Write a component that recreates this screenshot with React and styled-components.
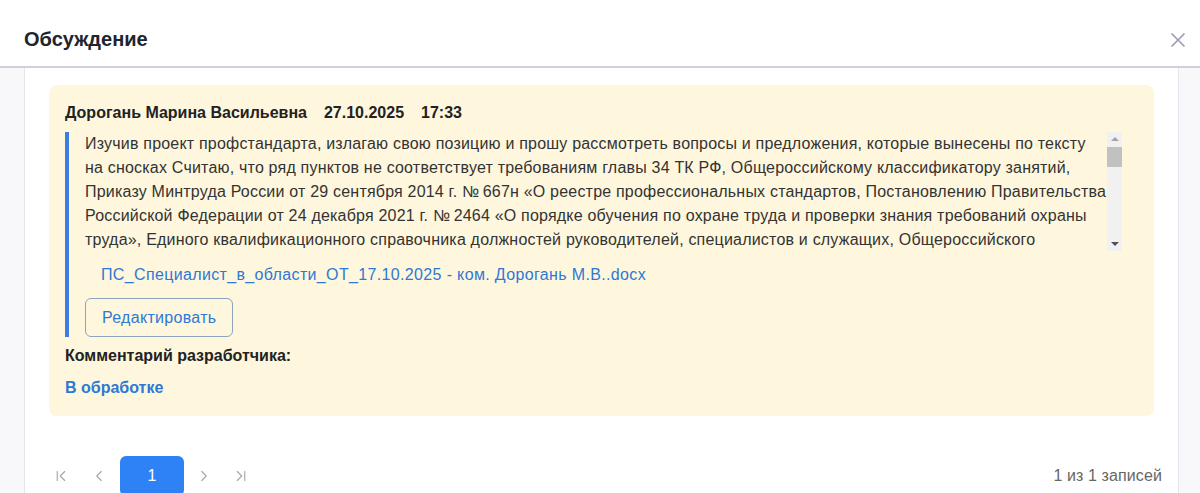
import React from "react";
import styled, { createGlobalStyle } from "styled-components";
import { ChevronFirst, ChevronLeft, ChevronRight, ChevronLast } from "lucide-react";

const GlobalStyle = createGlobalStyle`
  html, body {
    margin: 0;
    padding: 0;
    height: 493px;
    overflow: hidden;
    background: #ffffff;
  }
  * {
    box-sizing: border-box;
  }
  body {
    font-family: "Liberation Sans", Arial, sans-serif;
  }
`;

const Modal = styled.div`
  width: 1200px;
  height: 493px;
  display: flex;
  flex-direction: column;
  background: #fff;
  overflow: hidden;
`;

const Header = styled.div`
  height: 68px;
  flex-shrink: 0;
  display: flex;
  align-items: center;
  justify-content: space-between;
  padding: 13px 14px 0 24px;
  border-bottom: 2px solid #cfd0de;
`;

const Title = styled.h2`
  margin: 0;
  font-size: 20px;
  font-weight: 700;
  color: #1f242d;
`;

const CloseBtn = styled.button`
  border: none;
  background: none;
  padding: 0;
  width: 16px;
  height: 16px;
  display: flex;
  cursor: pointer;
`;

const Body = styled.div`
  flex: 1;
  display: flex;
  background: #f8f8fa;
  padding: 0 21px 0 24px;
  min-height: 0;
`;

const Panel = styled.div`
  flex: 1;
  background: #fff;
  border-left: 1px solid #e4e4ea;
  border-right: 1px solid #e4e4ea;
  padding: 17px 24px 0 24px;
`;

const Card = styled.div`
  background: #fef7dd;
  border-radius: 8px;
  padding: 18px 16px 17px 16px;
`;

const NameRow = styled.div`
  font-size: 16px;
  line-height: 20px;
  font-weight: 700;
  color: #222;
  display: flex;
`;

const Meta = styled.span`
  margin-left: ${(p) => p.$gap || 0}px;
`;

const Quote = styled.div`
  margin-top: 9px;
  border-left: 4px solid #3b7de2;
  padding-left: 16px;
  margin-right: 16px;
`;

const TextWrap = styled.div`
  display: flex;
  height: 119px;
`;

const Text = styled.p`
  flex: 1;
  margin: 0;
  overflow: hidden;
  font-size: 16px;
  letter-spacing: 0.2px;
  line-height: 24px;
  color: #333;
`;

const Scrollbar = styled.div`
  width: 15px;
  flex-shrink: 0;
  background: #f1f1f1;
  display: flex;
  flex-direction: column;
  align-items: center;
`;

const Arrow = styled.div`
  width: 0;
  height: 0;
  border-left: 4px solid transparent;
  border-right: 4px solid transparent;
  ${(p) =>
    p.$down
      ? "border-top: 4px solid #505050; margin-top: auto; margin-bottom: 5px;"
      : "border-bottom: 4px solid #a3a3a3; margin-top: 5px;"}
`;

const Thumb = styled.div`
  width: 15px;
  height: 20px;
  margin-top: 6px;
  background: #c1c1c1;
`;

const FileLink = styled.a`
  display: block;
  margin-top: 12px;
  padding-left: 16px;
  font-size: 16px;
  letter-spacing: 0.35px;
  line-height: 24px;
  color: #2e78d6;
  text-decoration: none;
`;

const OutlineButton = styled.button`
  margin-top: 11px;
  height: 39px;
  padding: 0 16px;
  border: 1px solid #8ea3c0;
  border-radius: 6px;
  background: transparent;
  color: #2e78d6;
  font-family: inherit;
  font-size: 16px;
  letter-spacing: 0.3px;
  display: block;
`;

const Label = styled.div`
  margin-top: ${(p) => p.$top}px;
  font-size: 16px;
  line-height: 22px;
  font-weight: 700;
  color: ${(p) => (p.$blue ? "#2e78d6" : "#222")};
`;

const Pager = styled.div`
  margin-top: 40px;
  margin-right: -8px;
  height: 40px;
  display: flex;
  align-items: center;
  justify-content: space-between;
`;

const PagerNav = styled.div`
  display: flex;
  align-items: center;
`;

const NavBtn = styled.button`
  width: 24px;
  height: 40px;
  margin-left: ${(p) => p.$gap || 0}px;
  border: none;
  background: none;
  padding: 0;
  display: flex;
  align-items: center;
  justify-content: center;
  color: #a6a6a6;
`;

const PageBtn = styled.button`
  width: 64px;
  height: 40px;
  margin-left: ${(p) => p.$gap || 0}px;
  border: none;
  border-radius: 6px;
  background: #2f82f6;
  color: #fff;
  font-family: inherit;
  font-size: 16px;
`;

const Count = styled.span`
  font-size: 16px;
  letter-spacing: 0.1px;
  color: #666;
`;

const comment =
  "Изучив проект профстандарта, излагаю свою позицию и прошу рассмотреть вопросы и предложения, которые вынесены по тексту на сносках Считаю, что ряд пунктов не соответствует требованиям главы 34 ТК РФ, Общероссийскому классификатору занятий, Приказу Минтруда России от 29 сентября 2014 г. №\u2009667н «О реестре профессиональных стандартов, Постановлению Правительства Российской Федерации от 24 декабря 2021 г. №\u20092464 «О порядке обучения по охране труда и проверки знания требований охраны труда», Единого квалификационного справочника должностей руководителей, специалистов и служащих, Общероссийского классификатора профессий рабочих, должностей служащих и тарифных разрядов.";

export default function App() {
  return (
    <>
      <GlobalStyle />
      <Modal>
        <Header>
          <Title>Обсуждение</Title>
          <CloseBtn aria-label="Закрыть">
            <svg width="16" height="16" viewBox="0 0 16 16">
              <path d="M1.5 1.5L14.5 14.5M14.5 1.5L1.5 14.5" stroke="#9a9bb2" strokeWidth="1.6" fill="none" />
            </svg>
          </CloseBtn>
        </Header>
        <Body>
          <Panel>
            <Card>
              <NameRow>
                <span>Дорогань Марина Васильевна</span>
                <Meta $gap={17}>27.10.2025</Meta>
                <Meta $gap={17}>17:33</Meta>
              </NameRow>
              <Quote>
                <TextWrap>
                  <Text>{comment}</Text>
                  <Scrollbar>
                    <Arrow />
                    <Thumb />
                    <Arrow $down />
                  </Scrollbar>
                </TextWrap>
                <FileLink href="#">ПС_Специалист_в_области_ОТ_17.10.2025 - ком. Дорогань М.В..docx</FileLink>
                <OutlineButton>Редактировать</OutlineButton>
              </Quote>
              <Label $top={8}>Комментарий разработчика:</Label>
              <Label $top={10} $blue>
                В обработке
              </Label>
            </Card>
            <Pager>
              <PagerNav>
                <NavBtn>
                  <ChevronFirst size={18} strokeWidth={1.5} />
                </NavBtn>
                <NavBtn $gap={14}>
                  <ChevronLeft size={18} strokeWidth={1.5} />
                </NavBtn>
                <PageBtn $gap={9}>1</PageBtn>
                <NavBtn $gap={8}>
                  <ChevronRight size={18} strokeWidth={1.5} />
                </NavBtn>
                <NavBtn $gap={13}>
                  <ChevronLast size={18} strokeWidth={1.5} />
                </NavBtn>
              </PagerNav>
              <Count>1 из 1 записей</Count>
            </Pager>
          </Panel>
        </Body>
      </Modal>
    </>
  );
}
